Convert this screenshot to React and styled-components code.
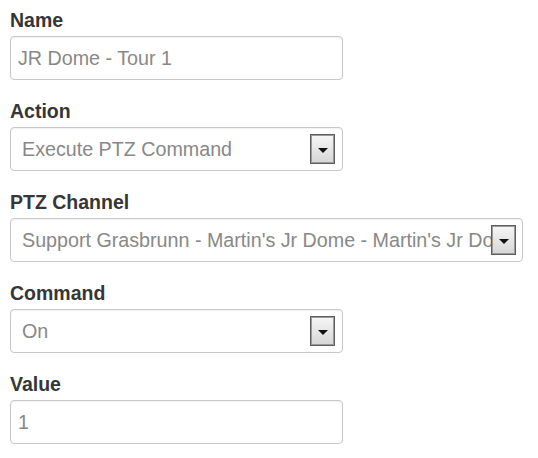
import React from "react";
import styled, { createGlobalStyle } from "styled-components";

const GlobalStyle = createGlobalStyle`
  html, body {
    margin: 0;
    padding: 0;
    background: #ffffff;
  }
  body {
    font-family: "Liberation Sans", Arial, sans-serif;
  }
`;

const fields = [
  { label: "Name", kind: "input", value: "JR Dome - Tour 1" },
  { label: "Action", kind: "select", value: "Execute PTZ Command" },
  {
    label: "PTZ Channel",
    kind: "select",
    value: "Support Grasbrunn - Martin's Jr Dome - Martin's Jr Dome",
    wide: true,
  },
  { label: "Command", kind: "select", value: "On" },
  { label: "Value", kind: "input", value: "1" },
];

function App() {
  return (
    <>
      <GlobalStyle />
      <Form>
        {fields.map((f) => (
          <Group key={f.label}>
            <Label>{f.label}</Label>
            {f.kind === "input" ? (
              <TextBox type="text" value={f.value} readOnly />
            ) : (
              <SelectBox $wide={f.wide}>
                <SelectText>{f.value}</SelectText>
                <DropButton>
                  <Arrow />
                </DropButton>
              </SelectBox>
            )}
          </Group>
        ))}
      </Form>
    </>
  );
}
export default App;

const Form = styled.form`
  display: flex;
  flex-direction: column;
  gap: 20px;
  padding: 9px 0 0 10px;
`;

const Group = styled.div`
  display: flex;
  flex-direction: column;
  gap: 5px;
`;

const Label = styled.label`
  font-size: 19.5px;
  line-height: 22px;
  font-weight: bold;
  color: #363636;
`;

const TextBox = styled.input`
  box-sizing: border-box;
  width: 333px;
  height: 44px;
  margin: 0;
  padding: 0 7px;
  border: 1px solid #c8c8c8;
  border-radius: 4px;
  box-shadow: inset 0 1px 2px rgba(0, 0, 0, 0.06);
  font-family: "Liberation Sans", Arial, sans-serif;
  font-size: 19.7px;
  color: #888;
  background: #fff;
  outline: none;
`;

const SelectBox = styled.div`
  box-sizing: border-box;
  width: ${(p) => (p.$wide ? "513px" : "333px")};
  height: 44px;
  display: flex;
  align-items: center;
  padding: 0 ${(p) => (p.$wide ? "6px" : "7px")} 0 11px;
  border: 1px solid #c8c8c8;
  border-radius: 4px;
  box-shadow: inset 0 1px 2px rgba(0, 0, 0, 0.06);
  background: #fff;
`;

const SelectText = styled.span`
  flex: 1;
  min-width: 0;
  overflow: hidden;
  white-space: nowrap;
  font-size: 19.7px;
  color: #888;
`;

const DropButton = styled.span`
  box-sizing: border-box;
  flex: none;
  width: 25px;
  height: 30px;
  display: flex;
  align-items: center;
  justify-content: center;
  border: 1px solid #5e5e5e;
  box-shadow: inset 0 0 0 1px #9a9a9a;
  background: linear-gradient(#f6f6f6, #d6d6d6);
`;

const Arrow = styled.span`
  width: 0;
  height: 0;
  margin-top: 2px;
  border-left: 5px solid transparent;
  border-right: 5px solid transparent;
  border-top: 5px solid #111;
`;
